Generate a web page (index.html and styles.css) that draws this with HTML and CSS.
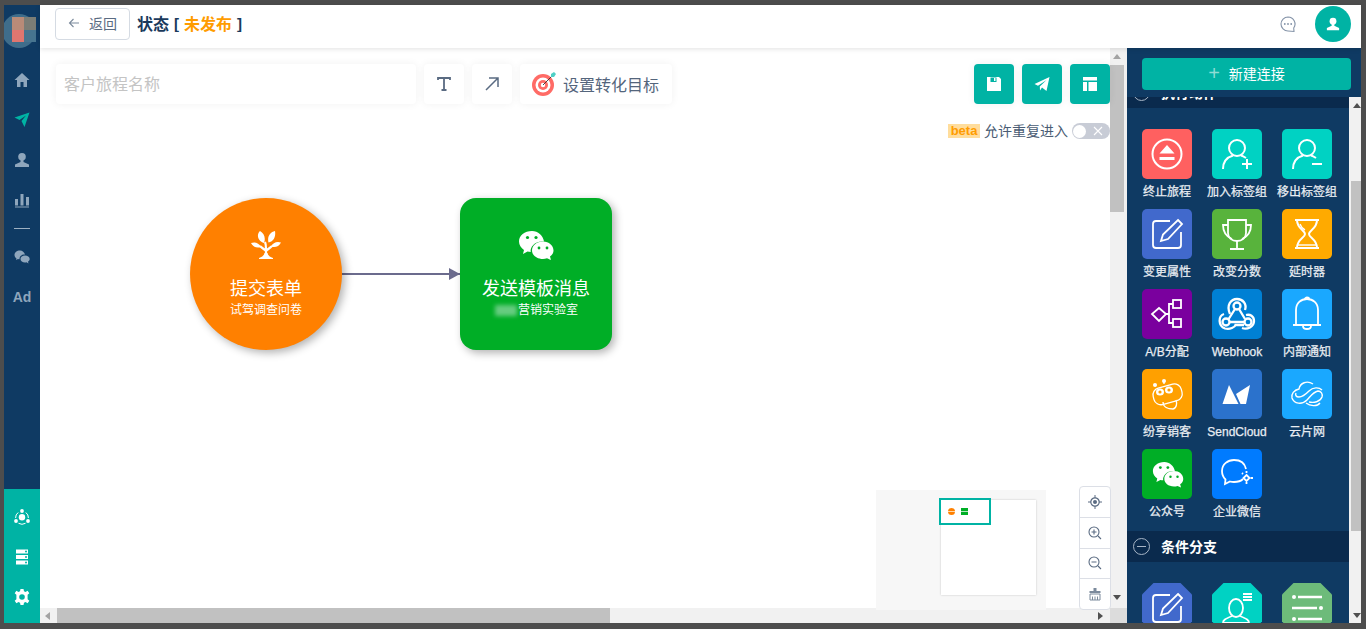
FILE: index.html
```html
<!DOCTYPE html>
<html lang="zh">
<head>
<meta charset="utf-8">
<title>客户旅程</title>
<link rel="stylesheet" href="styles.css">
</head>
<body>
<div class="app">
  <aside class="nav">
    <svg class="logo" width="36" height="43" viewBox="0 0 36 43"><circle cx="15" cy="26" r="17" fill="#3f6d8b"/><rect x="8" y="12" width="12" height="13" fill="#b98b78"/><rect x="20" y="12" width="12" height="13" fill="#7b7d76"/><rect x="8" y="25" width="12" height="12" fill="#df7670"/><rect x="20" y="25" width="12" height="12" fill="#47748f"/></svg>
    <div class="nav-main">
      <span class="nav-item"><svg width="16" height="16" viewBox="0 0 16 16"><path d="M8 1L0.5 8H3V15H6.5V10H9.5V15H13V8H15.5Z" fill="#8fa6bc"/></svg></span>
      <span class="nav-item"><svg width="16" height="16" viewBox="0 0 16 16"><path d="M0.5 5.5L15.5 0.5L10.5 15L7.5 9L12 3.5L5.5 8Z" fill="#00b3a4"/></svg></span>
      <span class="nav-item"><svg width="16" height="16" viewBox="0 0 16 16"><circle cx="8" cy="4.8" r="3.8" fill="#8fa6bc"/><path d="M6.5 8H9.5V10L15 12.5V15H1V12.5L6.500 10Z" fill="#8fa6bc"/></svg></span>
      <span class="nav-item"><svg width="16" height="16" viewBox="0 0 16 16"><path d="M1 7H4V13.500H1ZM6.500 2H9.500V13.500H6.500ZM12 5H15V13.500H12ZM1 14.500H15V15.500H1Z" fill="#8fa6bc"/></svg></span>
      <span class="nav-line"></span>
      <span class="nav-item"><svg width="16" height="16" viewBox="0 0 16 16"><path d="M6 1.500C2.800 1.500 .5 3.500 .5 6C.5 7.400 1.300 8.600 2.500 9.400L2 11L4 10C4.500 10.100 5 10.200 5.500 10.200C5.300 7.500 7.500 5.500 11 5.600C10.400 3.300 8.400 1.500 6 1.500Z" fill="#8fa6bc"/><path d="M11 6.500C8.500 6.500 6.500 8 6.500 10C6.500 12 8.500 13.500 11 13.500C11.500 13.500 12 13.400 12.500 13.300L14.500 14.500L14 12.700C15 12 15.700 11 15.700 10C15.700 8 13.500 6.500 11 6.500Z" fill="#8fa6bc"/></svg></span>
      <span class="nav-item nav-ad">Ad</span>
    </div>
    <div class="nav-foot">
      <span class="nav-item"><svg width="16" height="16" viewBox="0 0 16 16"><circle cx="8" cy="8.300" r="3.200" fill="#fff"/><circle cx="8" cy="2" r="1.900" fill="#fff"/><circle cx="2" cy="12" r="1.900" fill="#fff"/><circle cx="14" cy="12" r="1.900" fill="#fff"/><path d="M4.200 3.500A6.500 6.500 0 0 0 1.600 9M11.800 3.500A6.500 6.500 0 0 1 14.400 9M4.500 14.300A7 7 0 0 0 11.500 14.300" fill="none" stroke="#fff"/></svg></span>
      <span class="nav-item"><svg width="14" height="16" viewBox="0 0 14 16"><path d="M1 0.500H13V4.500H1ZM1 6H13V10H1ZM1 11.500H13V15.500H1Z" fill="#fff"/><circle cx="11" cy="2.500" r="1" fill="#00b3a4"/><circle cx="11" cy="8" r="1" fill="#00b3a4"/><circle cx="11" cy="13.500" r="1" fill="#00b3a4"/></svg></span>
      <span class="nav-item"><svg width="16" height="16" viewBox="0 0 16 16"><path d="M6.500 0H9.500L10 2.300L11.500 3L13.600 1.800L15.300 4.200L13.600 5.800V7V10.200L15.300 11.800L13.600 14.200L11.500 13L10 13.700L9.500 16H6.500L6 13.700L4.500 13L2.400 14.200L.7 11.800L2.400 10.200V5.800L.7 4.200L2.400 1.800L4.500 3L6 2.300Z" fill="#fff"/><circle cx="8" cy="8" r="2.800" fill="#00b3a4"/></svg></span>
    </div>
  </aside>

  <div class="work">
    <header class="topbar">
      <button class="back"><svg width="12" height="12" viewBox="0 0 12 12"><path d="M11 6H1.500M5.500 2L1.500 6L5.500 10" fill="none" stroke="#7b8a9c" stroke-width="1.100"/></svg><span>返回</span></button>
      <div class="title"><span>状态</span><span class="br">[</span><span class="state">未发布</span><span class="br">]</span></div>
      <div class="top-right">
        <svg width="18" height="18" viewBox="0 0 18 18"><path d="M9 2A7 7 0 1 0 9 16L15 16.500L14.700 13A7 7 0 0 0 9 2Z" fill="none" stroke="#8493a8" stroke-width="1.100"/><circle cx="5.800" cy="9" r=".9" fill="#8493a8"/><circle cx="9" cy="9" r=".9" fill="#8493a8"/><circle cx="12.200" cy="9" r=".9" fill="#8493a8"/></svg>
        <span class="avatar"><svg width="14" height="14" viewBox="0 0 16 16"><circle cx="8" cy="4.800" r="3.900" fill="#fff"/><path d="M6.500 8H9.500V10L15 12.500V15H1V12.500L6.500 10Z" fill="#fff"/></svg></span>
      </div>
    </header>

    <div class="body">
      <main class="stage">
        <div class="canvas">
          <div class="toolbar">
            <div class="name">客户旅程名称</div>
            <button class="tool"><svg width="16" height="16" viewBox="0 0 16 16"><path d="M2 4V2H14V4M8 2V14M5.500 14H10.500" fill="none" stroke="#5a6b82" stroke-width="1.800"/></svg></button>
            <button class="tool"><svg width="16" height="16" viewBox="0 0 16 16"><path d="M2 14L14 2M5 2H14V11" fill="none" stroke="#5a6b82" stroke-width="1.500"/></svg></button>
            <button class="goal"><svg width="26" height="26" viewBox="0 0 26 26"><circle cx="12" cy="14" r="11" fill="#ff6b66"/><circle cx="12" cy="14" r="7.500" fill="#fff"/><circle cx="12" cy="14" r="5" fill="#ff6b66"/><circle cx="12" cy="14" r="2.200" fill="#fff"/><path d="M12 14L21 5" stroke="#333" stroke-width=".9"/><path d="M20 3L23 1L25 3L23 6L20 6Z" fill="#4fd0c6"/></svg><span>设置转化目标</span></button>
            <div class="actions">
              <button class="act"><svg width="16" height="16" viewBox="0 0 16 16"><path d="M1 1H13L15 3V15H1Z" fill="#fff"/><rect x="4.500" y="1.500" width="6" height="4.500" fill="#00b3a4"/><rect x="8" y="2" width="1.500" height="3" fill="#fff"/><rect x="3" y="10" width="10" height="3.500" fill="#fff"/></svg></button>
              <button class="act"><svg width="16" height="16" viewBox="0 0 16 16"><path d="M0.500 8L15.500 1L12.500 15L8 11.500L6 14.500L5.800 10.500L12.500 4L4 9.800Z" fill="#fff"/></svg></button>
              <button class="act"><svg width="16" height="16" viewBox="0 0 16 16"><path d="M1 1H15V4.500H1ZM1 6H5V15H1ZM6.500 6H15V15H6.500Z" fill="#fff"/></svg></button>
            </div>
          </div>
          <div class="repeat">
            <span class="beta">beta</span><span>允许重复进入</span>
            <span class="toggle"><i class="knob"></i><svg width="10" height="10" viewBox="0 0 10 10"><path d="M1 1L9 9M9 1L1 9" stroke="#fff" stroke-width="1.100"/></svg></span>
          </div>

          <div class="edge"></div>
          <div class="node node-form">
            <svg width="30" height="30" viewBox="0 0 30 30"><path d="M15 24V18M15 21C17 19 19 18 21 16M15 21C13 19 11 18 9 16M15 19C15 16 15 14 14 12" fill="none" stroke="#fff" stroke-width="2.200"/><path d="M9 1C5 5 7 11 13 13C15 8 13 3 9 1ZM24 1C19 2 16 7 17.500 12.500C22.500 11.500 25 7 24 1ZM30 12.500C26 11 22 12.500 20 16.500C24 18 28 16.500 30 12.500ZM0 13C2 17 6 18.500 10 17C8 13 4 11.500 0 13Z" fill="#fff"/><path d="M8 28C11 27 13 25.500 13.500 23H16.500C17 25.500 19 27 22 28V29H8Z" fill="#fff"/></svg>
            <b>提交表单</b><small>试驾调查问卷</small>
          </div>
          <div class="node node-send">
            <svg width="36" height="30" viewBox="0 0 36 30"><path d="M14 1C6.500 1 1 5.500 1 11.500C1 15 3 18 6 20L5 24L9.500 21.500C10.500 21.800 11.500 22 12.700 22C12 17 16.500 11.500 24 11.500H26C25 5.500 20 1 14 1Z" fill="#fff"/><path d="M25 11.500C18.500 11.500 14 15.500 14 20.500C14 25 18.500 29 25 29C26.500 29 27.500 28.800 29 28.300L33 30L32 26.500C34.300 25 35.500 23 35.500 20.500C35.500 15.500 31 11.500 25 11.500Z" fill="#fff"/><circle cx="9.500" cy="7.500" r="1.600" fill="#00ae26"/><circle cx="18" cy="7.500" r="1.600" fill="#00ae26"/><circle cx="21" cy="18" r="1.400" fill="#00ae26"/><circle cx="29" cy="18" r="1.400" fill="#00ae26"/></svg>
            <b>发送模板消息</b><small><i class="smudge"></i>营销实验室</small>
          </div>

          <div class="minimap">
            <div class="mini-page"><i class="mini-a"></i><i class="mini-b"></i></div>
            <div class="mini-view"></div>
          </div>
          <div class="zoomer">
            <span><svg width="14" height="14" viewBox="0 0 14 14"><circle cx="7" cy="7" r="4.200" fill="none" stroke="#5a6b82" stroke-width="1.200"/><circle cx="7" cy="7" r="2" fill="#5a6b82"/><path d="M7 0V3M7 11V14M0 7H3M11 7H14" stroke="#5a6b82"/></svg></span>
            <span><svg width="14" height="14" viewBox="0 0 14 14"><circle cx="6" cy="6" r="5" fill="none" stroke="#5a6b82" stroke-width="1.100"/><path d="M3.500 6H8.500M6 3.500V8.500M10 10L13 13" stroke="#5a6b82" stroke-width="1.100"/></svg></span>
            <span><svg width="14" height="14" viewBox="0 0 14 14"><circle cx="6" cy="6" r="5" fill="none" stroke="#5a6b82" stroke-width="1.100"/><path d="M3.500 6H8.500M10 10L13 13" stroke="#5a6b82" stroke-width="1.100"/></svg></span>
            <span><svg width="14" height="14" viewBox="0 0 14 14"><path d="M5.500 1H8.500V4H12.500V6H1.500V4H5.500Z" fill="#7b8a9c"/><path d="M2 7H12V13H2ZM4.500 9.500V13M7 9.500V13M9.500 9.500V13" fill="none" stroke="#7b8a9c"/></svg></span>
          </div>
        </div>
        <div class="vbar"><i class="arrow up"></i><i class="vthumb"></i><i class="arrow down"></i></div>
        <div class="hbar"><i class="arrow left"></i><i class="hthumb"></i><i class="arrow right"></i></div>
        <div class="corner"></div>
      </main>

      <aside class="panel">
        <div class="panel-head"><button class="new"><span class="plus">+</span><span>新建连接</span></button></div>
        <div class="panel-body">
          <div class="panel-list">
            <div class="sec sec-clip"><i class="minus"></i><b>执行动作</b></div>
            <div class="tiles">
              <div class="tile"><span class="ic red"><svg viewBox="0 0 50 50"><circle cx="25" cy="25" r="14.500" fill="none" stroke="#fff" stroke-width="2"/><path d="M25 16L32.500 24.500H17.500ZM17.500 28H32.500V31H17.500Z" fill="#fff"/></svg></span><em>终止旅程</em></div>
              <div class="tile"><span class="ic cyan"><svg viewBox="0 0 50 50"><g fill="none" stroke="#fff" stroke-width="2"><circle cx="25" cy="19" r="8"/><path d="M11 40C11 32 16 28 21 26.500M29 26.500C31 27 32.500 28 34 29M30 35H40M35 30V40"/></g></svg></span><em>加入标签组</em></div>
              <div class="tile"><span class="ic cyan"><svg viewBox="0 0 50 50"><g fill="none" stroke="#fff" stroke-width="2"><circle cx="25" cy="19" r="8"/><path d="M11 40C11 32 16 28 21 26.500M29 26.500C31 27 32.500 28 34 29M30 35H40"/></g></svg></span><em>移出标签组</em></div>
              <div class="tile"><span class="ic blue"><svg viewBox="0 0 50 50"><g fill="none" stroke="#fff" stroke-width="1.800"><path d="M28 12H14C12 12 11 13 11 15V36C11 38 12 39 14 39H36C38 39 39 38 39 36V23"/><path d="M36 11L40 15L26 30L19 32L21 25.500Z"/></g></svg></span><em>变更属性</em></div>
              <div class="tile"><span class="ic green"><svg viewBox="0 0 50 50"><g fill="none" stroke="#fff" stroke-width="1.800"><path d="M16 11H34V24C34 29 30 32 25 32C20 32 16 29 16 24Z"/><path d="M16 16H11C11 22 13 27 20 30M34 16H39C39 22 37 27 30 30M25 32V39M18 40H32"/></g></svg></span><em>改变分数</em></div>
              <div class="tile"><span class="ic amber"><svg viewBox="0 0 50 50"><g fill="none" stroke="#fff" stroke-width="2"><path d="M13 11H37M13 39H37M15 11C15 20 23 21 23 25C23 29 15 30 15 39M35 11C35 20 27 21 27 25C27 29 35 30 35 39"/><path d="M18 15C19 18 21 20 23 21" stroke-width="1.400"/><path d="M16 36H34" stroke-width="1.400"/></g></svg></span><em>延时器</em></div>
              <div class="tile"><span class="ic purple"><svg viewBox="0 0 50 50"><g fill="none" stroke="#fff" stroke-width="1.800"><path d="M17 19L24 25L17 32L10 25Z"/><rect x="31" y="11" width="8" height="8"/><rect x="31" y="30" width="8" height="8"/><path d="M24 25H27M31 15H27V34H31"/></g></svg></span><em>A/B分配</em></div>
              <div class="tile"><span class="ic hook"><svg viewBox="0 0 50 50"><g fill="none" stroke="#fff" stroke-width="2.300"><circle cx="25" cy="17" r="3.500"/><circle cx="14" cy="33" r="3.500"/><circle cx="36" cy="33" r="3.500"/><path d="M16 31L23 20M27 20L33 30M18 33H32"/><path d="M18 25C14 16 19 10 25 10C31 10 35 15 33 21"/><path d="M12 25C6 27 6 37 13 39.500C18 41 23 38 23.500 36H32"/><path d="M30 39C35 41 42 38 42 32C42 27 38 25 34 26"/></g></svg></span><em>Webhook</em></div>
              <div class="tile"><span class="ic sky"><svg viewBox="0 0 50 50"><g fill="none" stroke="#fff" stroke-width="1.800"><path d="M14 36V21C14 14 19 10 25 10C31 10 36 14 36 21V36"/><path d="M11 36H39M21 37C21 41 29 41 29 37M23 10C23 8 27 8 27 10"/></g></svg></span><em>内部通知</em></div>
              <div class="tile"><span class="ic amber2"><svg viewBox="0 0 50 50"><g fill="none" stroke="#fff" stroke-width="1.300"><rect x="11" y="17" width="29" height="17" rx="7" transform="rotate(-15 25 25)"/><path d="M14 17L13 16M22 15V12M21 33C21 38 26 40 31 40C35 39 35 34 34 31"/></g><circle cx="13" cy="16" r="2" fill="#fff"/><circle cx="22" cy="12" r="2" fill="#fff"/><ellipse cx="18" cy="23" rx="4" ry="3.500" fill="#fff"/><ellipse cx="27" cy="21" rx="4" ry="3.500" fill="#fff"/><circle cx="18" cy="23" r="1.600" fill="#ffa000"/><circle cx="27" cy="21" r="1.600" fill="#ffa000"/></svg></span><em>纷享销客</em></div>
              <div class="tile"><span class="ic sendc"><svg viewBox="0 0 50 50"><path d="M10.500 35L17 16L26.500 35ZM24 25L38 16L34 35H28.500Z" fill="#fff"/></svg></span><em>SendCloud</em></div>
              <div class="tile"><span class="ic sky"><svg viewBox="0 0 50 50"><g fill="none" stroke="#fff" stroke-width="1.400"><path d="M31 15C25 11 18 14 17 20C12 21 9 25 10 29C12 35 20 36 25 31C28 28 31 23 36 22C39 22 41 25 40 28C38 33 32 34 27 33"/><path d="M40 21C37 18 31 18 27 22C24 25 21 28 17 28C14 28 13 26 14 24"/><path d="M24 34C28 37 35 38 38 34"/></g></svg></span><em>云片网</em></div>
              <div class="tile"><span class="ic wx"><svg viewBox="0 0 50 50"><g transform="translate(10 12) scale(.88)"><path d="M14 1C6.500 1 1 5.500 1 11.500C1 15 3 18 6 20L5 24L9.500 21.500C10.500 21.800 11.500 22 12.700 22C12 17 16.500 11.500 24 11.500H26C25 5.500 20 1 14 1Z" fill="#fff"/><path d="M25 11.500C18.500 11.500 14 15.500 14 20.500C14 25 18.500 29 25 29C26.500 29 27.500 28.800 29 28.300L33 30L32 26.500C34.300 25 35.500 23 35.500 20.500C35.500 15.500 31 11.500 25 11.500Z" fill="#fff"/><circle cx="9.500" cy="7.500" r="1.600" fill="#00ae26"/><circle cx="18" cy="7.500" r="1.600" fill="#00ae26"/><circle cx="21" cy="18" r="1.400" fill="#00ae26"/><circle cx="29" cy="18" r="1.400" fill="#00ae26"/></g></svg></span><em>公众号</em></div>
              <div class="tile"><span class="ic corp"><svg viewBox="0 0 50 50"><g fill="none" stroke="#fff" stroke-width="1.800"><path d="M31 30C29 32 26 33 22 33C21 33 20 33 18 32.500L13 35L13.500 30.500C11 28 10 25 10 22C10 15 16 11 22 11C29 11 33 15 34 20"/><path d="M34.500 26L37.500 29L34.500 32L31.500 29Z"/><path d="M41 29H38.500M34.500 24V22M34.500 35V33M31 25L30 24"/></g></svg></span><em>企业微信</em></div>
            </div>
            <div class="sec"><i class="minus"></i><b>条件分支</b></div>
            <div class="tiles">
              <div class="tile"><span class="ic octa blue"><svg viewBox="0 0 50 50"><g fill="none" stroke="#fff" stroke-width="1.800"><path d="M28 12H14C12 12 11 13 11 15V36C11 38 12 39 14 39H36C38 39 39 38 39 36V23"/><path d="M36 11L40 15L26 30L19 32L21 25.500Z"/></g></svg></span></div>
              <div class="tile"><span class="ic octa cyan"><svg viewBox="0 0 50 50"><g fill="none" stroke="#fff" stroke-width="1.800"><ellipse cx="24" cy="25" rx="7" ry="9"/><path d="M11 40C11 37 13 36 20 33M37 40C37 37 35 36 28 33M11 40H37"/></g><path d="M31 10H40V12H31ZM31 13H40V15H31ZM31 16H40V18H31Z" fill="#fff"/></svg></span></div>
              <div class="tile"><span class="ic octa sage"><svg viewBox="0 0 50 50"><g fill="none" stroke="#fff" stroke-width="2.400"><path d="M16 14H40M10 25H35M16 36H40"/></g><circle cx="12" cy="14" r="2" fill="#fff"/><circle cx="39" cy="25" r="2" fill="#fff"/><circle cx="12" cy="36" r="2" fill="#fff"/></svg></span></div>
            </div>
          </div>
          <div class="pbar"><i class="arrow up"></i><i class="pthumb"></i><i class="arrow down"></i></div>
        </div>
      </aside>
    </div>
  </div>
</div>
</body>
</html>
```

FILE: styles.css
```css
* { box-sizing: border-box; }
html, body { margin: 0; height: 100%; overflow: hidden; }
body {
  background: #4d4d4d;
  font-family: "Liberation Sans", "Noto Sans CJK SC", sans-serif;
  color: #1a3a5c;
}
button { font-family: inherit; border: 0; padding: 0; background: #fff; }
em, i { font-style: normal; }
.app { display: flex; height: 629px; padding: 5px 5px 6px 4px; }

/* left rail */
.nav { width: 36px; flex: none; background: #0f3a63; display: flex; flex-direction: column; overflow: hidden; }
.logo { flex: none; display: block; }
.nav-main { flex: 1; display: flex; flex-direction: column; align-items: center; padding-top: 12px; }
.nav-item { height: 40px; width: 36px; flex: none; display: flex; align-items: center; justify-content: center; }
.nav-line { width: 16px; height: 1px; background: #9db0c2; margin: 8px 0 8px; flex: none; }
.nav-ad { font: bold 14px "Liberation Sans", sans-serif; color: #8fa6bc; }
.nav-foot { background: #00b3a4; height: 134px; flex: none; padding-top: 8px; }

/* main column */
.work { flex: 1; min-width: 0; display: flex; flex-direction: column; }
.topbar { height: 43px; flex: none; background: #fff; display: flex; align-items: center; padding: 0 10px 5px 15px; box-shadow: 0 1px 5px rgba(0,0,0,.12); position: relative; z-index: 3; }
.back { width: 75px; height: 32px; border: 1px solid #d5dbe3; border-radius: 4px; color: #5a6b82; font-size: 14px; display: flex; align-items: center; justify-content: center; gap: 9px; padding-bottom: 2px; }
.title { margin-left: 7px; font-size: 16px; font-weight: 700; color: #1a3a5c; display: flex; align-items: center; padding-bottom: 2px; }
.br { font-weight: 700; font-size: 15px; margin: 0 5px; }
.state { color: #ff9c00; }
.top-right { margin-left: auto; display: flex; align-items: center; gap: 18px; }
.avatar { width: 36px; height: 36px; border-radius: 50%; background: #00b3a4; display: flex; align-items: center; justify-content: center; }

.body { flex: 1; min-height: 0; display: flex; }
.stage { flex: none; width: 1087px; display: grid; grid-template-columns: 1070px 17px; grid-template-rows: 560px 15px; }

/* canvas */
.canvas { position: relative; z-index: 1; background: #fff; }
.toolbar { position: absolute; left: 16px; right: 0; top: 16px; display: flex; gap: 8px; }
.name, .tool, .goal, .act { height: 40px; border-radius: 4px; box-shadow: 0 0 8px rgba(0,0,0,.06); }
.name { width: 360px; background: #fff; color: #c4c4c4; font-size: 16px; line-height: 40px; padding: 1px 0 0 8px; }
.tool { width: 40px; display: flex; align-items: center; justify-content: center; }
.goal { width: 152px; display: flex; align-items: center; justify-content: center; gap: 6px; font-size: 16px; color: #54657c; padding-right: 2px; }
.actions { margin-left: auto; display: flex; gap: 8px; }
.act { width: 40px; background: #00b3a4; display: flex; align-items: center; justify-content: center; }
.repeat { position: absolute; right: 0; top: 75px; display: flex; align-items: center; font-size: 14px; line-height: 16px; color: #4a5c74; }
.beta { background: #ffdd9c; color: #ff9c00; font: bold 13px "Liberation Sans", sans-serif; margin-right: 4px; height: 14px; line-height: 14px; width: 32px; text-align: center; }
.toggle { width: 38px; height: 16px; border-radius: 8px; background: #c8ccd6; margin-left: 4px; display: flex; align-items: center; justify-content: space-between; padding: 0 7px 0 1px; }
.knob { width: 13px; height: 13px; border-radius: 50%; background: #fff; }
.node { position: absolute; top: 150px; width: 152px; height: 152px; color: #fff; display: flex; flex-direction: column; align-items: center; box-shadow: 3px 3px 8px rgba(0,0,0,.3); padding-top: 32px; }
.node b { font-weight: 400; font-size: 18px; line-height: 24px; margin-top: 17px; }
.node small { font-size: 12px; line-height: 16px; margin-top: 1px; position: relative; }
.node-form { left: 150px; border-radius: 50%; background: #ff8000; }
.node-send { left: 420px; border-radius: 16px; background: #00ae26; }
.node-send small { margin-left: 24px; }
.smudge { position: absolute; left: -23px; top: 3px; width: 22px; height: 11px; background: #66cc80; filter: blur(2px); }
.edge { position: absolute; left: 302px; top: 225px; width: 118px; height: 2px; background: #6b6b8d; }
.edge::after { content: ""; position: absolute; right: 0; top: -5px; border-left: 11px solid #6b6b8d; border-top: 6px solid transparent; border-bottom: 6px solid transparent; }
.minimap { position: absolute; left: 836px; top: 442px; width: 170px; height: 120px; background: #f7f7f7; }
.mini-page { position: absolute; left: 65px; top: 10px; width: 95px; height: 95px; background: #fff; box-shadow: 0 0 2px rgba(0,0,0,.2); }
.mini-a { position: absolute; left: 7px; top: 8px; width: 7px; height: 7px; border-radius: 50%; background: linear-gradient(#ff8000 45%, #ffd9a8 45%, #ffd9a8 60%, #ff8000 60%); }
.mini-b { position: absolute; left: 20px; top: 8px; width: 7px; height: 7px; background: linear-gradient(#00ae26 45%, #b5e8c0 45%, #b5e8c0 60%, #00ae26 60%); }
.mini-view { position: absolute; left: 63px; top: 8px; width: 52px; height: 27px; border: 2px solid #00b3a4; }
.zoomer { position: absolute; left: 1039px; top: 438px; width: 32px; height: 124px; background: #fff; border: 1px solid #dcdfe6; border-radius: 4px; display: flex; flex-direction: column; }
.zoomer span { flex: 1; display: flex; align-items: center; justify-content: center; border-bottom: 1px solid #dcdfe6; }
.zoomer span:last-child { border-bottom: 0; }

/* scrollbars */
.vbar { background: #f1f1f1; padding-right: 3px; display: flex; flex-direction: column; align-items: center; }
.vthumb { width: 14px; height: 147px; background: #c1c1c1; margin-top: 6px; }
.vbar .arrow.down { margin-bottom: 8px; }
.hbar { background: #f1f1f1; display: flex; align-items: center; padding-left: 5px; }
.hthumb { width: 553px; height: 15px; background: #c1c1c1; margin-left: 7px; }
.corner { background: #dcdcdc; }
.arrow { display: block; width: 0; height: 0; flex: none; border: 4px solid transparent; }
.arrow.up { border-top: 0; border-bottom: 5px solid #505050; margin-top: 6px; }
.vbar .arrow.up { border-bottom-color: #a3a3a3; }
.arrow.down { border-bottom: 0; border-top: 5px solid #505050; margin-top: auto; margin-bottom: 5px; }
.arrow.left { border-left: 0; border-right: 5px solid #a3a3a3; }
.arrow.right { border-right: 0; border-left: 5px solid #505050; margin-left: auto; margin-right: 7px; }

/* right panel */
.panel { width: 234px; flex: none; background: #0f3a63; display: flex; flex-direction: column; min-height: 0; }
.panel-head { height: 49px; flex: none; padding: 10px 10px 0 15px; position: relative; z-index: 1; background: #0f3a63; }
.new { width: 209px; height: 32px; border-radius: 4px; background: #00b3a4; color: #fff; font-size: 14px; display: flex; align-items: center; justify-content: center; gap: 9px; padding-bottom: 3px; }
.plus { color: #8fdcd5; font: 20px/20px "Liberation Sans", sans-serif; }
.panel-body { flex: 1; min-height: 0; display: flex; }
.panel-list { flex: 1; min-width: 0; overflow: hidden; }
.sec { height: 31px; background: #0a2a4d; color: #fff; display: flex; align-items: center; padding-left: 6px; gap: 11px; font-size: 14px; }
.sec b { font-weight: 700; padding-bottom: 2px; }
.sec-clip { margin-top: -20px; }
.minus { width: 17px; height: 17px; border: 1px solid #a7b5c6; border-radius: 50%; position: relative; flex: none; }
.minus::after { content: ""; position: absolute; left: 3px; right: 3px; top: 7px; height: 1px; background: #a7b5c6; }
.tiles { display: grid; grid-template-columns: repeat(3, 70px); padding: 21px 0 2px 5px; justify-content: start; }
.tile { width: 70px; height: 80px; display: flex; flex-direction: column; align-items: center; }
.ic { width: 50px; height: 50px; border-radius: 5px; flex: none; display: block; }
.ic svg { display: block; width: 50px; height: 50px; }
.tile em { font-size: 12px; line-height: 16px; margin-top: 5px; color: #e9edf2; white-space: nowrap; -webkit-text-stroke: .25px #e9edf2; }
.octa { border-radius: 0; clip-path: polygon(23% 0, 77% 0, 100% 23%, 100% 77%, 77% 100%, 23% 100%, 0 77%, 0 23%); }
.red { background: #ff6060; }
.cyan { background: #00d2c3; }
.blue { background: #4169cc; }
.green { background: #58b33c; }
.amber { background: #ffaa00; }
.amber2 { background: #ffa000; }
.purple { background: #7a009e; }
.hook { background: #0080d4; }
.sky { background: #1aa8ff; }
.sendc { background: #2b72cc; }
.wx { background: #00ae26; }
.corp { background: #007bff; }
.sage { background: #6dbb7a; }
.pbar { width: 12px; flex: none; background: #f1f1f1; display: flex; flex-direction: column; align-items: center; }
.pbar .arrow { align-self: flex-end; margin-right: 0; }
.pthumb { width: 10px; height: 350px; background: #c1c1c1; margin-top: 74px; align-self: flex-end; }
.pbar .arrow.up { margin-top: 6px; margin-bottom: -1px; }
```
